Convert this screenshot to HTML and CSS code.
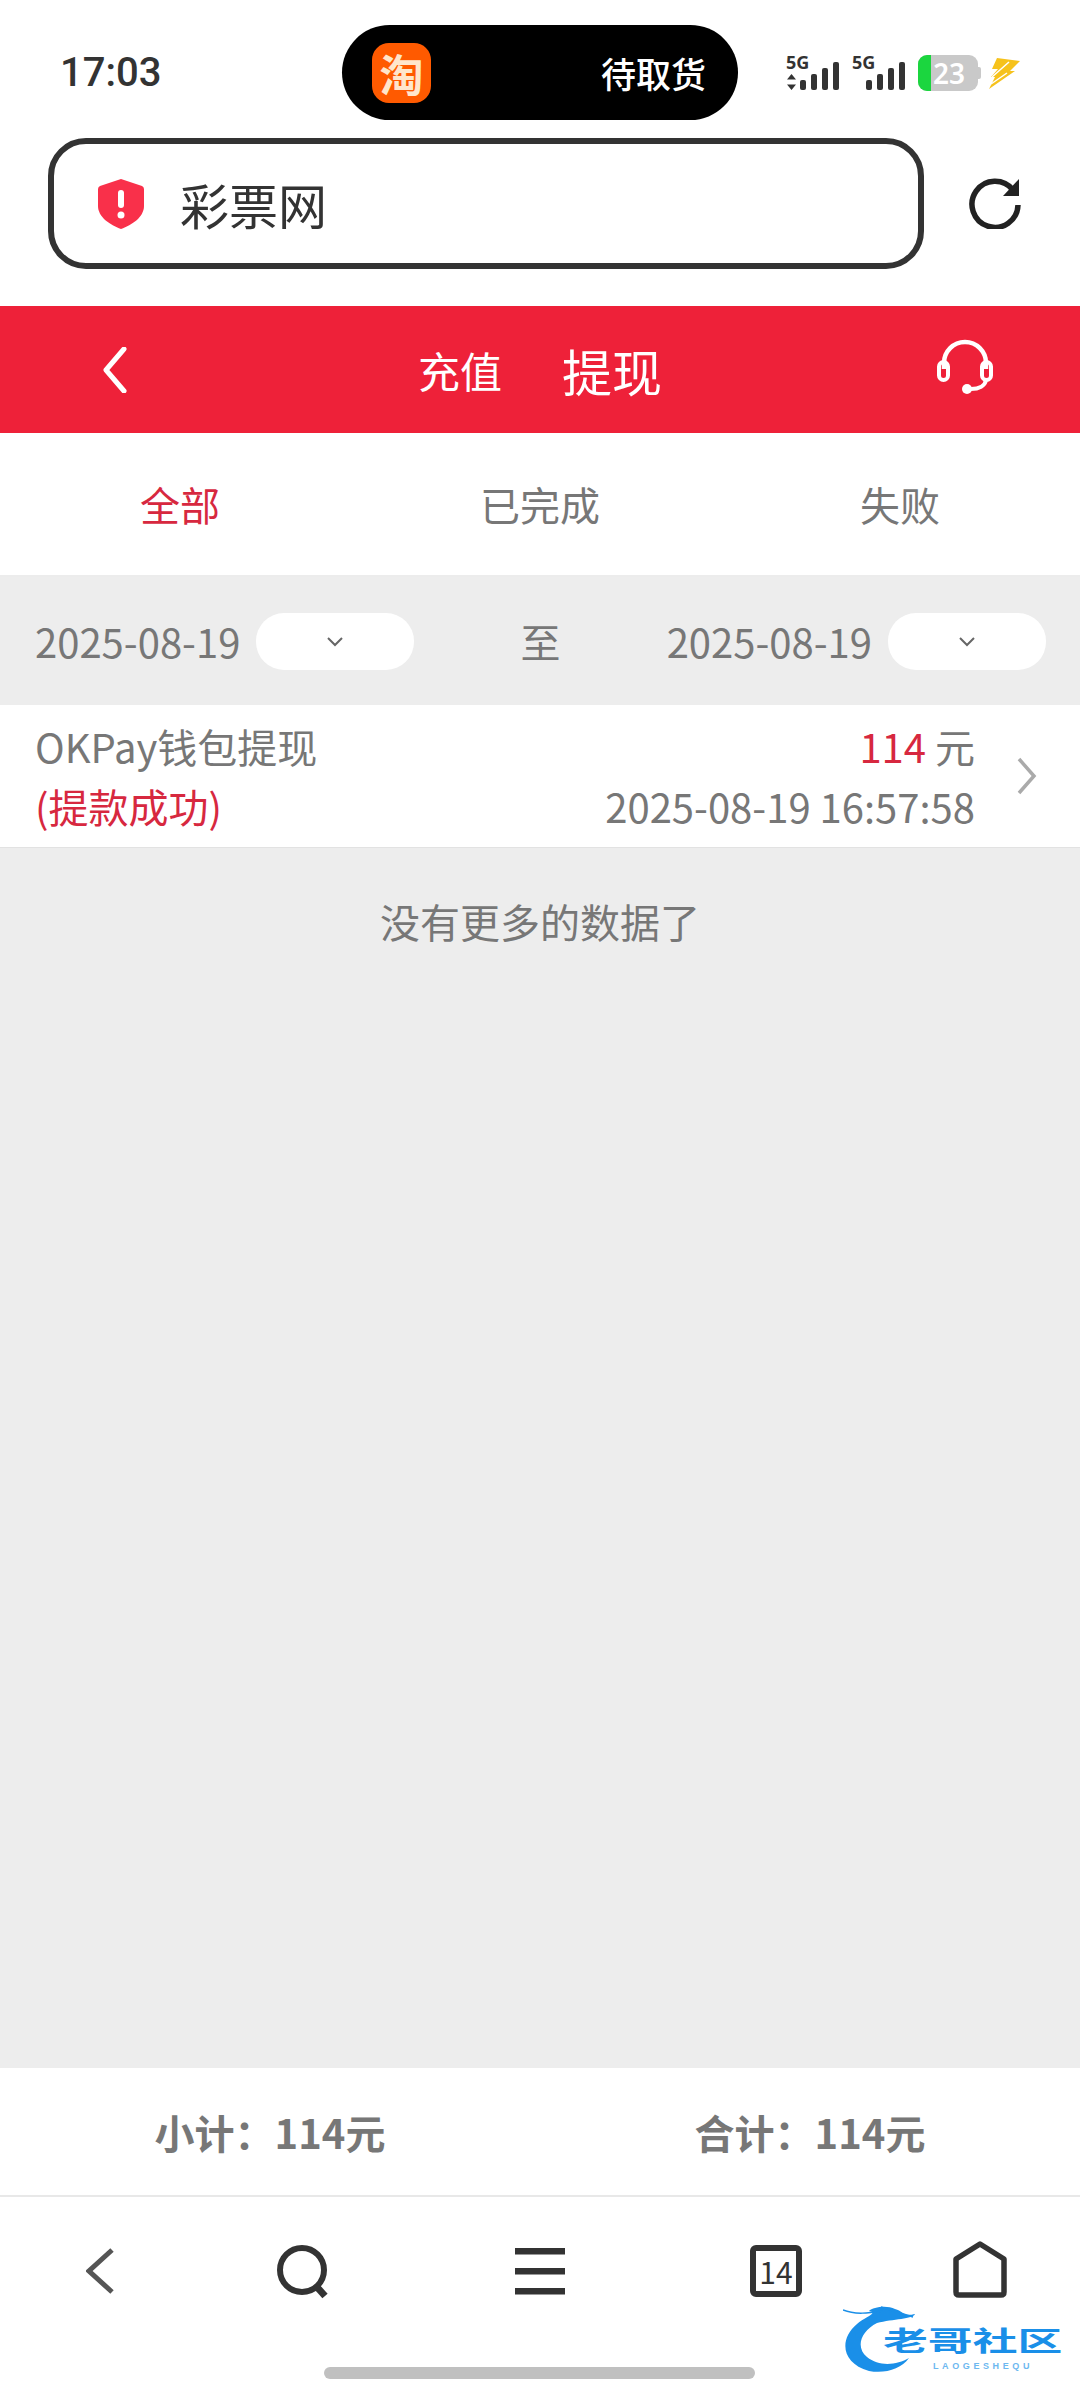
FILE: index.html
```html
<!DOCTYPE html>
<html lang="zh-CN">
<head>
    <meta charset="UTF-8">
    <meta name="viewport" content="width=device-width, initial-scale=1.0">
    <title>彩票网</title>
    <link rel="stylesheet" href="styles.css">
</head>
<body>
    <div class="status-bar">
        <span class="time">17:03</span>
        <div class="island">
            <span class="app-icon">淘</span>
            <span class="island-text">待取货</span>
        </div>
        <div class="status-icons">
            <div class="signal">
                <span class="net">5G</span>
                <svg width="54" height="37" viewBox="0 0 54 37">
                    <path d="M5.500 21 10 26.500H1zM5.500 37 1 31.500H10z" fill="#333"/>
                    <rect x="14" y="27" width="6" height="10" rx="2" fill="#333"/>
                    <rect x="25" y="21" width="6" height="16" rx="2" fill="#333"/>
                    <rect x="36" y="15" width="6" height="22" rx="2" fill="#333"/>
                    <rect x="47" y="9" width="6" height="28" rx="2" fill="#333"/>
                </svg>
            </div>
            <div class="signal">
                <span class="net">5G</span>
                <svg width="54" height="37" viewBox="0 0 54 37">
                    <rect x="14" y="27" width="6" height="10" rx="2" fill="#333"/>
                    <rect x="25" y="21" width="6" height="16" rx="2" fill="#333"/>
                    <rect x="36" y="15" width="6" height="22" rx="2" fill="#333"/>
                    <rect x="47" y="9" width="6" height="28" rx="2" fill="#333"/>
                </svg>
            </div>
            <div class="battery">
                <div class="battery-body">
                    <div class="battery-fill"></div>
                    <span class="battery-num">23</span>
                </div>
                <div class="battery-tip"></div>
            </div>
            <svg class="bolt" width="31" height="32" viewBox="0 0 31 32">
                <path d="M8 1 31 4 21 14 26 14 0 32 6 20 2 20 9 12 3 12z" fill="#f6c21c"/>
                <path d="M3 20 20 5M2 27 18 16" stroke="#fff" stroke-width="1.500"/>
            </svg>
        </div>
    </div>

    <div class="url-row">
        <div class="url-box">
            <svg width="46" height="50" viewBox="0 0 46 50">
                <path d="M23 0 44 7Q46 8 46 10V27C46 38 34 46 23 50 12 46 0 38 0 27V10Q0 8 2 7z" fill="#f9304a"/>
                <rect x="20" y="11" width="6" height="18" rx="3" fill="#fff"/>
                <circle cx="23" cy="36" r="3.500" fill="#fff"/>
            </svg>
            <span class="url-text">彩票网</span>
        </div>
        <svg class="reload" width="52" height="52" viewBox="0 0 52 52">
            <path d="M44 13A23 23 0 1 0 49 28" fill="none" stroke="#222" stroke-width="5.500"/>
            <path d="M50 2V19H34z" fill="#222"/>
        </svg>
    </div>

    <header class="top-bar">
        <div class="top-left">
            <svg width="24" height="46" viewBox="0 0 24 46">
                <path d="M21 2 3 23 21 44" fill="none" stroke="#fff" stroke-width="5" stroke-linecap="round" stroke-linejoin="round"/>
            </svg>
        </div>
        <div class="top-title">
            <span class="title-sub">充值</span>
            <span class="title-main">提现</span>
        </div>
        <div class="top-right">
            <svg width="60" height="56" viewBox="0 0 60 56">
                <path d="M9 30V24a21 21 0 0 1 42 0V30" fill="none" stroke="#fff" stroke-width="4.500"/>
                <rect x="4" y="23" width="9" height="18" rx="4.500" fill="none" stroke="#fff" stroke-width="4"/>
                <rect x="47" y="23" width="9" height="18" rx="4.500" fill="none" stroke="#fff" stroke-width="4"/>
                <path d="M51 41C50 47 44 50 36 50" fill="none" stroke="#fff" stroke-width="4"/>
                <circle cx="32" cy="50" r="5" fill="#fff"/>
            </svg>
        </div>
    </header>

    <nav class="tabs">
        <div class="tab active">全部</div>
        <div class="tab">已完成</div>
        <div class="tab">失败</div>
    </nav>

    <main class="content">
        <div class="filter">
            <div class="date-group">
                <span>2025-08-19</span>
                <div class="date-pick">
                    <svg width="18" height="11" viewBox="0 0 18 11"><path d="M2 2 9 9 16 2" fill="none" stroke="#666" stroke-width="2"/></svg>
                </div>
            </div>
            <span>至</span>
            <div class="date-group">
                <span>2025-08-19</span>
                <div class="date-pick">
                    <svg width="18" height="11" viewBox="0 0 18 11"><path d="M2 2 9 9 16 2" fill="none" stroke="#666" stroke-width="2"/></svg>
                </div>
            </div>
        </div>

        <div class="record">
            <div class="record-left">
                <div>OKPay钱包提现</div>
                <div class="red">(提款成功)</div>
            </div>
            <div class="record-right">
                <div><span class="red">114</span> 元</div>
                <div>2025-08-19 16:57:58</div>
            </div>
            <svg class="record-arrow" width="20" height="38" viewBox="0 0 20 38">
                <path d="M2 2 17 19 2 36" fill="none" stroke="#aaa" stroke-width="3.500"/>
            </svg>
        </div>

        <p class="no-more">没有更多的数据了</p>
    </main>

    <div class="summary">
        <div class="sum-item">小计：114元</div>
        <div class="sum-item">合计：114元</div>
    </div>

    <div class="bottom-nav">
        <svg width="28" height="60" viewBox="0 0 28 60">
            <path d="M26 10 3 31 26 52" fill="none" stroke="#555" stroke-width="5"/>
        </svg>
        <svg width="52" height="60" viewBox="0 0 52 60">
            <circle cx="25" cy="30" r="22" fill="none" stroke="#333" stroke-width="6"/>
            <path d="M39 46 48 56" stroke="#333" stroke-width="7"/>
        </svg>
        <svg width="50" height="60" viewBox="0 0 50 60">
            <rect y="8" width="50" height="6.500" fill="#333"/>
            <rect y="28" width="50" height="6.500" fill="#333"/>
            <rect y="48" width="50" height="6.500" fill="#333"/>
        </svg>
        <div class="tab-count"><span>14</span></div>
        <svg width="54" height="60" viewBox="0 0 54 60">
            <path d="M27 4 51 19V52Q51 55 48 55H6Q3 55 3 52V19z" fill="none" stroke="#333" stroke-width="5.500" stroke-linejoin="round"/>
        </svg>
    </div>

    <div class="home-bar"></div>

    <div class="watermark">
        <svg class="dragon" width="110" height="68" viewBox="0 0 110 68">
            <path d="M14 19C-4 34-2 58 26 66 42 69 58 64 66 53 54 60 36 62 24 52 12 42 18 26 34 18 50 14 70 14 72 9 60 12 60 6 52 4 44 0 30 2 26 6 36 8 22 12 14 19z" fill="#1a8fe8"/>
            <path d="M0 5C12 10 26 8 40 6M38 2 70 12" stroke="#1a8fe8" stroke-width="1.500" fill="none"/>
        </svg>
        <span class="wm-title">老哥社区</span>
        <span class="wm-sub">LAOGESHEQU</span>
    </div>
</body>
</html>
```

FILE: styles.css
```css
* {
    box-sizing: border-box;
}
html, body {
    margin: 0;
    padding: 0;
}
body {
    position: relative;
    width: 1080px;
    height: 2400px;
    display: flex;
    flex-direction: column;
    padding-bottom: 21px;
    background: #fff;
    font-family: "Noto Sans CJK SC", "Noto Sans", sans-serif;
    font-size: 40px;
    color: #777;
    overflow: hidden;
}
svg {
    display: block;
    flex: none;
}

/* status bar */
.status-bar {
    display: flex;
    align-items: center;
    height: 95px;
    margin-top: 25px;
    padding-left: 60px;
}
.time {
    width: 282px;
    font-family: "Roboto", sans-serif;
    font-size: 40px;
    font-weight: 500;
    color: #333;
}
.island {
    display: flex;
    align-items: center;
    justify-content: space-between;
    width: 396px;
    height: 95px;
    padding: 0 32px 0 30px;
    background: #000;
    border-radius: 48px;
}
.app-icon {
    display: flex;
    align-items: center;
    justify-content: center;
    width: 59px;
    height: 60px;
    background: #ff5a00;
    border-radius: 17px;
    color: #ffe6cc;
    font-size: 44px;
    font-weight: 700;
    line-height: 1;
}
.island-text {
    color: #fff;
    font-size: 35px;
    font-weight: 500;
    line-height: 1;
}
.status-icons {
    display: flex;
    align-items: flex-start;
    height: 37px;
    margin-left: 48px;
    margin-top: -2px;
}
.signal {
    position: relative;
    width: 66px;
    height: 37px;
}
.net {
    position: absolute;
    left: 0;
    top: -1px;
    font-family: "Noto Sans", sans-serif;
    font-size: 18px;
    font-weight: 700;
    line-height: 20px;
    color: #333;
}
.battery {
    display: flex;
    align-items: center;
    height: 36px;
    margin-top: 2px;
}
.battery-body {
    display: flex;
    align-items: center;
    width: 60px;
    height: 36px;
    background: #c9c9c9;
    border-radius: 9px;
    overflow: hidden;
}
.battery-fill {
    width: 13px;
    height: 36px;
    background: #1bd63f;
}
.battery-num {
    margin-left: 2px;
    color: #fff;
    font-family: "Noto Sans", sans-serif;
    font-size: 28px;
    font-weight: 600;
    line-height: 1;
}
.battery-tip {
    width: 3px;
    height: 12px;
    background: #c9c9c9;
    border-radius: 0 2px 2px 0;
}
.bolt {
    margin-left: 8px;
    margin-top: 4px;
}

/* address bar */
.url-row {
    display: flex;
    align-items: center;
    height: 131px;
    margin-top: 18px;
    padding-left: 48px;
}
.url-box {
    display: flex;
    align-items: center;
    width: 876px;
    height: 131px;
    padding-left: 44px;
    border: 6px solid #333;
    border-radius: 38px;
}
.url-text {
    margin-left: 36px;
    color: #333;
    font-size: 49px;
    line-height: 1;
}
.reload {
    margin-left: 45px;
    margin-top: -2px;
}

/* red header */
.top-bar {
    display: grid;
    grid-template-columns: 1fr auto 1fr;
    align-items: center;
    height: 127px;
    margin-top: 37px;
    background: #ee2139;
}
.top-left {
    padding-left: 103px;
}
.top-right {
    display: flex;
    justify-content: flex-end;
    padding-right: 85px;
    margin-top: -6px;
}
.top-title {
    display: flex;
    align-items: center;
    gap: 60px;
    color: #fff;
}
.title-sub {
    font-size: 42px;
}
.title-main {
    font-size: 50px;
}

/* tabs */
.tabs {
    display: grid;
    grid-template-columns: repeat(3, 1fr);
    align-items: center;
    height: 144px;
    border-bottom: 2px solid #ececec;
    text-align: center;
}
.tab {
    color: #777;
}
.tab.active {
    color: #d7283f;
}

/* list */
.content {
    flex: 1;
    background: #ededed;
}
.filter {
    display: flex;
    align-items: center;
    justify-content: space-between;
    height: 128px;
    padding: 0 34px 0 35px;
}
.date-group {
    display: flex;
    align-items: center;
    gap: 16px;
}
.date-pick {
    display: flex;
    align-items: center;
    justify-content: center;
    width: 158px;
    height: 57px;
    background: #fff;
    border-radius: 28px;
}
.record {
    display: flex;
    align-items: center;
    height: 143px;
    padding: 0 43px 0 35px;
    background: #fff;
    border-bottom: 1px solid #e2e2e2;
    line-height: 60px;
}
.record-left {
    flex: 1;
}
.record-right {
    text-align: right;
}
.record-arrow {
    margin-left: 42px;
}
.red {
    color: #d7283f;
}
.no-more {
    margin: 43px 0 0;
    line-height: 60px;
    text-align: center;
}

/* totals */
.summary {
    display: grid;
    grid-template-columns: 1fr 1fr;
    align-items: center;
    height: 129px;
    border-bottom: 2px solid #e8e8e8;
    text-align: center;
}
.sum-item {
    font-weight: 700;
}

/* browser toolbar */
.bottom-nav {
    display: grid;
    grid-template-columns: 199px 208px 266px 206px 201px;
    justify-items: center;
    align-items: start;
    padding-top: 43px;
    height: 170px;
}
.tab-count {
    display: flex;
    align-items: center;
    justify-content: center;
    width: 52px;
    height: 52px;
    margin-top: 5px;
    border: 6px solid #333;
    border-radius: 6px;
    color: #333;
    font-size: 30px;
    line-height: 1;
}
.home-bar {
    align-self: flex-start;
    width: 431px;
    height: 12px;
    margin-left: 324px;
    background: #c0c0c0;
    border-radius: 6px;
}

/* watermark sits over the toolbar */
.watermark {
    position: absolute;
    left: 843px;
    top: 2305px;
    width: 225px;
    height: 70px;
}
.dragon {
    position: absolute;
    left: 0;
    top: 0;
}
.wm-title {
    position: absolute;
    left: 40px;
    top: 20px;
    color: #1a8fe8;
    font-size: 27px;
    font-weight: 700;
    line-height: 30px;
    white-space: nowrap;
    transform: scaleX(1.66);
    transform-origin: left center;
}
.wm-sub {
    position: absolute;
    left: 90px;
    top: 56px;
    color: #6db8f0;
    font-family: "Liberation Sans", sans-serif;
    font-size: 9px;
    font-weight: 700;
    letter-spacing: 3.600px;
    line-height: 10px;
    white-space: nowrap;
}
```
